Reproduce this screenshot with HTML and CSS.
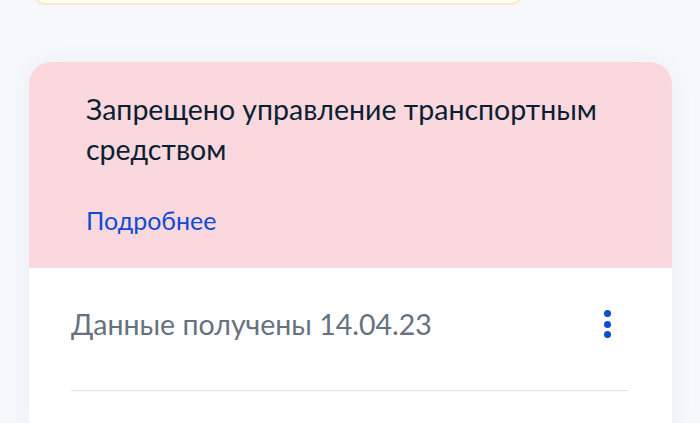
FILE: index.html
```html
<!DOCTYPE html>
<html lang="ru">
<head>
<meta charset="utf-8">
<link rel="stylesheet" href="styles.css">
</head>
<body>
<div class="page">
  <div class="notice"></div>
  <section class="card">
    <div class="alert">
      <p class="alert-title">Запрещено управление транспортным средством</p>
      <a class="alert-link" href="#">Подробнее</a>
    </div>
    <div class="info">
      <div class="info-row">
        <span class="info-text">Данные получены 14.04.23</span>
        <span class="menu" aria-label="Меню"><i></i><i></i><i></i></span>
      </div>
      <div class="divider"></div>
    </div>
  </section>
</div>
</body>
</html>
```
FILE: styles.css
```css
* { box-sizing: border-box; }
html, body { margin: 0; padding: 0; }
body {
  background: #f6f8fc;
  font-family: Lato, "Noto Sans", sans-serif;
  width: 700px;
  height: 423px;
  overflow: hidden;
}
.page {
  display: flex;
  flex-direction: column;
}
.notice {
  margin: -40px 0 0 33px;
  width: 490px;
  height: 45px;
  border: 2px solid #fbeac2;
  border-radius: 12px;
  background: #fffdf7;
}
.card {
  margin: 57px 28px 0 29px;
  border-radius: 22px 22px 0 0;
  overflow: hidden;
  background: #ffffff;
  box-shadow: 0 2px 24px rgba(40, 70, 120, 0.06);
}
.alert {
  background: #fbd8de;
  padding: 27px 40px 32px 57px;
  display: flex;
  flex-direction: column;
  align-items: flex-start;
}
.alert-title {
  margin: 0;
  font-size: 28.5px;
  line-height: 40px;
  color: #0b1f33;
}
.alert-link {
  margin-top: 35px;
  font-size: 25px;
  line-height: 32px;
  color: #0d4cd3;
  text-decoration: none;
}
.info {
  padding: 36px 43px 40px 42px;
}
.info-row {
  display: flex;
  align-items: center;
  justify-content: space-between;
}
.info-text {
  font-size: 28.5px;
  line-height: 40px;
  color: #66727f;
}
.menu {
  display: flex;
  flex-direction: column;
  gap: 3.5px;
  margin-right: 18px;
}
.menu i {
  display: block;
  width: 7px;
  height: 7px;
  border-radius: 50%;
  background: #0d4cd3;
}
.divider {
  margin-top: 46px;
  height: 1px;
  background: #e1e4e8;
}
```
